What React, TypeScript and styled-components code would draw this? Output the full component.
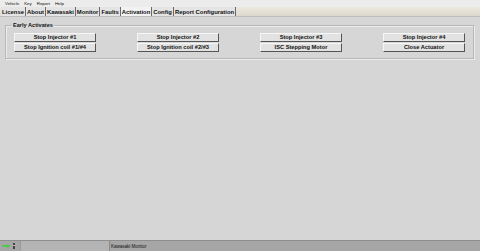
import styled, { createGlobalStyle } from 'styled-components';

const GlobalStyle = createGlobalStyle`
  html, body {
    margin: 0;
    padding: 0;
    width: 480px;
    height: 251px;
    overflow: hidden;
    background: #d6d6d6;
  }
  * {
    box-sizing: border-box;
  }
`;

const Window = styled.div`
  width: 480px;
  height: 251px;
  display: flex;
  flex-direction: column;
  font-family: 'Liberation Sans', Arial, sans-serif;
  color: #111;
`;

const MenuBar = styled.div`
  height: 7px;
  display: flex;
  align-items: center;
  gap: 5px;
  padding-left: 5px;
  background: #ececec;
  font-size: 4.4px;
`;

const TabBar = styled.div`
  height: 10px;
  display: flex;
  align-items: stretch;
  padding-left: 1px;
  background: linear-gradient(#ebe8df, #dcd8cc);
  border-bottom: 1px solid #bdbdbd;
`;

const Tab = styled.div<{ $active?: boolean }>`
  display: flex;
  align-items: center;
  padding: 0 1px 0 1px;
  font-size: 5.9px;
  font-weight: bold;
  color: #111;
  background: ${(p) => (p.$active ? '#f2f2f2' : '#e4e4e4')};
  border-right: 1px solid #6a6a6a;
`;

const Content = styled.div`
  flex: 1;
  padding: 5px 6px 0 5px;
  background: #d6d6d6;
`;

const Group = styled.fieldset`
  margin: 0;
  padding: 5px 8px 6px 8px;
  border: 1px solid #b8b8b8;
  box-shadow: inset 1px 1px 0 #ececec, 1px 1px 0 #ececec;
`;

const Legend = styled.legend`
  padding: 0 1px;
  margin-left: -2px;
  font-size: 5.6px;
  font-weight: bold;
`;

const ButtonGrid = styled.div`
  display: grid;
  grid-template-columns: repeat(4, 82px);
  justify-content: space-between;
  row-gap: 1px;
`;

const ActionButton = styled.button`
  height: 9px;
  padding: 0;
  margin: 0;
  font-family: 'Liberation Sans', Arial, sans-serif;
  font-size: 5.7px;
  font-weight: bold;
  color: #111;
  background: #e2e2e2;
  border: none;
  border-top: 1px solid #f6f6f6;
  border-left: 1px solid #f6f6f6;
  border-right: 1px solid #555;
  border-bottom: 1px solid #555;
  line-height: 1;
`;

const StatusBar = styled.div`
  height: 11px;
  display: flex;
  align-items: stretch;
  background: #a6a6a6;
  border-top: 1px solid #8e8e8e;
  font-size: 4.5px;
`;

const StatusIcons = styled.div`
  width: 20px;
  display: flex;
  align-items: center;
  gap: 3px;
  padding-left: 2px;
`;

const StatusPanel = styled.div`
  width: 90px;
  background: #b4b4b4;
  border-left: 1px solid #999;
  border-right: 1px solid #8a8a8a;
`;

const StatusText = styled.div`
  display: flex;
  align-items: center;
  padding-left: 1px;
`;

const tabs = [
  'License',
  'About',
  'Kawasaki',
  'Monitor',
  'Faults',
  'Activation',
  'Config',
  'Report Configuration',
];

const buttons = [
  'Stop Injector #1',
  'Stop Injector #2',
  'Stop Injector #3',
  'Stop Injector #4',
  'Stop Ignition coil #1/#4',
  'Stop Ignition coil #2/#3',
  'ISC Stepping Motor',
  'Close Actuator',
];

function App() {
  return (
    <Window>
      <GlobalStyle />
      <MenuBar>
        <span>Vehicle</span>
        <span>Key</span>
        <span>Report</span>
        <span>Help</span>
      </MenuBar>
      <TabBar>
        {tabs.map((t) => (
          <Tab key={t} $active={t === 'Activation'}>
            {t}
          </Tab>
        ))}
      </TabBar>
      <Content>
        <Group>
          <Legend>Early Activates</Legend>
          <ButtonGrid>
            {buttons.map((b) => (
              <ActionButton key={b}>{b}</ActionButton>
            ))}
          </ButtonGrid>
        </Group>
      </Content>
      <StatusBar>
        <StatusIcons>
          <svg width="8" height="4" viewBox="0 0 8 4">
            <path d="M0 2h8" stroke="#3ecf3e" strokeWidth="1.5" />
            <path d="M5 0.5l2 1.5-2 1.5" stroke="#3ecf3e" strokeWidth="0.8" fill="none" />
          </svg>
          <svg width="2" height="6" viewBox="0 0 2 6">
            <rect x="0" y="0" width="2" height="6" fill="#444" />
            <rect x="0" y="2" width="2" height="1" fill="#bbb" />
          </svg>
        </StatusIcons>
        <StatusPanel />
        <StatusText>Kawasaki Monitor</StatusText>
      </StatusBar>
    </Window>
  );
}

export default App;
